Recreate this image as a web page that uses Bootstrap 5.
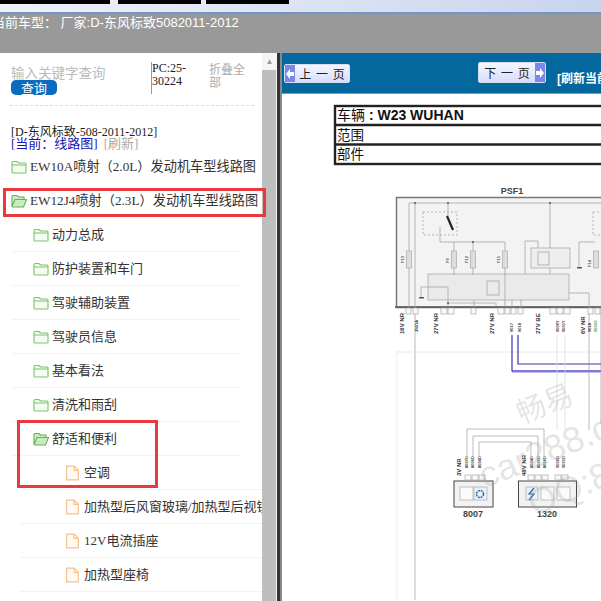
<!DOCTYPE html>
<html lang="zh"><head><meta charset="utf-8"><title>线路图</title>
<link href="https://cdn.jsdelivr.net/npm/bootstrap@5.3.0/dist/css/bootstrap.min.css" rel="stylesheet">
<style>
html,body{width:601px;height:601px;overflow:hidden;margin:0;background:#fff}
body{font-family:"Liberation Serif","Noto Sans CJK SC",serif;font-size:13px;color:#333}
.tabstrip{height:14px;background:linear-gradient(90deg,#f0f2f8,#c8d4ee);border-bottom:2px solid #6f94d0;gap:5px}
.tabblock{height:4px;background:#000}
.tb1{width:110px}.tb2{width:83px;margin-left:3px}.tb3{width:83px}
.greybar{height:39px;background:#999;color:#fff;font:13px/1 "Liberation Sans","Noto Sans CJK SC",sans-serif;padding-top:2px}
.greybar span{display:inline-block;margin-left:-8px;white-space:pre}
.workarea{height:548px}
.sidepane{width:262px;flex:none;overflow:hidden;padding-top:10px}
.searchrow{height:42px;margin-left:11px}
.searchbox{width:140px;color:#bbb;font:13.5px/1.1 "Noto Sans CJK SC",sans-serif;padding-top:2px}
.askbtn{display:block;width:46px;height:15px;background:#0a6cc0;color:#fff;border-radius:5px;text-align:center;font-size:13px;line-height:15px}
.pccode{width:58px;border-left:1px solid #999;line-height:13px;font-size:12px;color:#222;height:32px;margin-top:-1px}
.foldall{width:44px;color:#aaa;font:12px/13px "Noto Sans CJK SC",sans-serif;margin-top:-1px}
.dashrule{border-top:1px dashed #ddd;margin:0 8px 0 10px;height:21px}
.crumb{margin-left:11px;font-size:12px;line-height:12px;color:#222;height:24px}
.crumb b{font-weight:400;color:#1414b4;font-size:13px}.crumb i{font-style:normal;color:#aaa;font-size:13px;margin-left:6px}
.treerow{height:34px;display:flex;align-items:center;white-space:nowrap;border-bottom:1px solid #f3f3f3;margin-right:22px;font-size:13px;color:#333}
.treerow svg{flex:none;margin-right:3px}
.lv1{margin-left:11px;margin-right:4px;border-color:#fff;font-size:13.2px}
.lv2{margin-left:11px;padding-left:22px}
.lv3{margin-left:20px;padding-left:45px;margin-right:0;width:242px;overflow:hidden}
.lv3 svg{margin-right:4px}
.lined{position:relative}
.redframe{position:absolute;border:3px solid #e8393c;pointer-events:none}
.rf1{left:3px;top:135px;width:263px;height:29px}
.rf2{left:17px;top:367px;width:141px;height:68px}
.sbar{width:15px;flex:none;background:#f4f4f4}
.sbarup{height:17px;color:#999;font-size:8px;line-height:17px;text-align:center}
.sthumb{width:14px;flex:1;background:#bebebe}
.splitter{width:5px;flex:none;border-left:3px solid #333;border-right:2px solid #888}
.docpane{flex:1;min-width:0;overflow:hidden}
.bluebar{height:41px;background:#04689f;border-bottom:1px solid #7f9aa8}
.pgbtn{height:19px;flex:none;background:linear-gradient(#f4f6ff,#d8defa);border:1px solid #d5def5;color:#222;font:12px/17px "Noto Sans CJK SC",sans-serif;display:flex;align-items:center;border-radius:2px;white-space:nowrap}
.pgbtn u{width:10px;height:100%;background:#7a88ea;flex:none;text-decoration:none;display:flex;align-items:center;justify-content:center}
.pgbtn em{font-style:normal;flex:1;text-align:center;word-spacing:2px}
.pv{width:66px;margin:11px 0 0 2px}
.nx{width:68px;height:21px;margin:9px 0 0 128px}
.refreshlink{color:#fff;font-weight:700;font-size:12px;margin:17px 0 0 11px;white-space:nowrap;font-family:"Liberation Sans","Noto Sans CJK SC",sans-serif}
.drawing{display:block}
.drawing text{font-family:"Liberation Sans","Noto Sans CJK SC",sans-serif}
</style></head>
<body>
<div class="tabstrip d-flex align-items-start"><div class="tabblock tb1"></div><div class="tabblock tb2"></div><div class="tabblock tb3"></div></div>
<div class="greybar"><span>当前车型： 厂家:D-东风标致5082011-2012</span></div>
<div class="workarea d-flex lined">
 <div class="sidepane">
  <div class="searchrow d-flex">
   <div class="searchbox">输入关键字查询<a class="askbtn text-decoration-none">查询</a></div>
   <div class="pccode">PC:25-<br>30224</div>
   <div class="foldall">折叠全部</div>
  </div>
  <div class="dashrule"></div>
  <div class="crumb">[D-东风标致-508-2011-2012]<br><b>[当前：线路图]</b><i>[刷新]</i></div>
  <svg width="0" height="0" class="position-absolute"><defs>
   <symbol id="fc" viewBox="0 0 16 14"><path d="M1 12.5V2.5Q1 1.5 2 1.5H6L7.5 3H14Q15 3 15 4V12.5Q15 13 14 13H2Q1 13 1 12.5ZM1 5H15" fill="#f6fbf3" stroke="#7ac46b" stroke-width="1.1"/></symbol>
   <symbol id="fo" viewBox="0 0 16 14"><path d="M1 12.5V2.5Q1 1.5 2 1.5H6L7.5 3H13V5.5H4L1 12.5ZM1 12.5Q1 13 2 13H12.5L15.5 5.5H4" fill="#cdebc2" stroke="#62b356" stroke-width="1.1"/></symbol>
   <symbol id="fl" viewBox="0 0 14 15"><path d="M1.5 1H8.5L12.5 5V14H1.5ZM8.5 1V5H12.5" fill="#fffaf4" stroke="#f3c28e" stroke-width="1.1"/></symbol>
  </defs></svg>
  <div class="treerow lv1"><svg width="16" height="14"><use href="#fc"/></svg><span>EW10A喷射（2.0L）发动机车型线路图</span></div>
  <div class="treerow lv1"><svg width="16" height="14"><use href="#fo"/></svg><span>EW12J4喷射（2.3L）发动机车型线路图</span></div>
  <div class="treerow lv2"><svg width="16" height="14"><use href="#fc"/></svg><span>动力总成</span></div>
  <div class="treerow lv2"><svg width="16" height="14"><use href="#fc"/></svg><span>防护装置和车门</span></div>
  <div class="treerow lv2"><svg width="16" height="14"><use href="#fc"/></svg><span>驾驶辅助装置</span></div>
  <div class="treerow lv2"><svg width="16" height="14"><use href="#fc"/></svg><span>驾驶员信息</span></div>
  <div class="treerow lv2"><svg width="16" height="14"><use href="#fc"/></svg><span>基本看法</span></div>
  <div class="treerow lv2"><svg width="16" height="14"><use href="#fc"/></svg><span>清洗和雨刮</span></div>
  <div class="treerow lv2"><svg width="16" height="14"><use href="#fo"/></svg><span>舒适和便利</span></div>
  <div class="treerow lv3"><svg width="15" height="16"><use href="#fl"/></svg><span>空调</span></div>
  <div class="treerow lv3"><svg width="15" height="16"><use href="#fl"/></svg><span>加热型后风窗玻璃/加热型后视镜</span></div>
  <div class="treerow lv3"><svg width="15" height="16"><use href="#fl"/></svg><span>12V电流插座</span></div>
  <div class="treerow lv3"><svg width="15" height="16"><use href="#fl"/></svg><span>加热型座椅</span></div>
 </div>
 <div class="sbar d-flex flex-column"><div class="sbarup">▲</div><div class="sthumb"></div></div>
 <div class="splitter"></div>
 <div class="docpane">
  <div class="bluebar d-flex">
   <div class="pgbtn pv"><u><svg width="8" height="10"><path d="M0 5 4 0V3H8V7H4V10Z" fill="#fff"/></svg></u><em>上 一 页</em></div>
   <div class="pgbtn nx"><em>下 一 页</em><u><svg width="8" height="10"><path d="M8 5 4 0V3H0V7H4V10Z" fill="#fff"/></svg></u></div>
   <div class="refreshlink">[刷新当前页]</div>
  </div>
  <svg class="drawing" width="320" height="507" viewBox="281 94 320 507">
   <rect x="281" y="94" width="320" height="507" fill="#fff"/>
   <g fill="none" stroke="#222" stroke-width="2.400"><rect x="334" y="106" width="290" height="58"/><path d="M334 125H624M334 144.500H624"/></g>
   <text x="336" y="120" font-size="14" fill="#111">车辆 <tspan font-weight="700">: W23 WUHAN</tspan></text>
   <text x="336" y="140" font-size="13.500" fill="#111">范围</text>
   <text x="336" y="159" font-size="13.500" fill="#111">部件</text>

   <text x="511" y="194" font-size="9" font-weight="700" fill="#444" text-anchor="middle">PSF1</text>
   <rect x="395.500" y="197.500" width="230" height="110" fill="#f3f3f3" stroke="#777" stroke-width="1.500"/>
   <path d="M394 307H601" stroke="#555" stroke-width="1.500"/>
   <rect x="427" y="274" width="141" height="26" fill="#eaeaea" stroke="#aaa" stroke-width=".8"/>
   <rect x="530" y="248" width="39" height="20" fill="#eee" stroke="#aaa" stroke-width=".8"/>
   <g fill="none" stroke="#a5a5a5" stroke-width=".8">
    <path d="M408 203H601M414 203V600M447 203V216M408 203V251M408 268V307"/>
    <path d="M439 227V242H504V251M504 268V307M453 242V251M453 268V275M472 242V251M472 268V275M549 203V248M549 268V274"/>
    <rect x="422" y="212" width="34" height="23" stroke-dasharray="2 2"/>
    <rect x="592" y="212" width="20" height="23" stroke-dasharray="2 2"/>
    <rect x="537" y="252" width="11" height="13"/>
    <rect x="486" y="281" width="12" height="14"/>
    <path d="M524 274V241H537V248M578 267V242H594M568 293H588V307M420 297V287H447V307M447 303H495V307M511 307V300M520 307V300M473 300V307M588 307V430M600 307V424"/>
   </g>
   <g fill="#ddd" stroke="#aaa" stroke-width=".7">
    <rect x="405.500" y="251" width="5" height="17"/><rect x="450.500" y="251" width="5" height="17"/><rect x="469.500" y="251" width="5" height="17"/><rect x="501.500" y="251" width="5" height="17"/><rect x="592.500" y="251" width="5" height="17"/>
   </g>
   <g fill="#555"><circle cx="414" cy="203" r="1"/><circle cx="447" cy="203" r="1"/><circle cx="549" cy="203" r="1"/><circle cx="472" cy="242" r="1"/><circle cx="447" cy="303" r="1"/><rect x="418" y="297" width="5" height="1.500"/><rect x="576" y="267" width="5" height="1.500"/></g>
   <path d="M446 216 452 230" stroke="#222" stroke-width="2.200"/>
   <g font-size="4" fill="#555" font-weight="700">
    <text transform="translate(403 263) rotate(-90)">F13</text><text transform="translate(448 263) rotate(-90)">F9</text><text transform="translate(467 263) rotate(-90)">F12</text><text transform="translate(499 263) rotate(-90)">F15</text><text transform="translate(590 267) rotate(-90)">F14</text>
   </g>
   <g font-size="6" font-weight="700" fill="#333">
    <text transform="translate(403 334) rotate(-90)">16V NR</text>
    <text transform="translate(437 334) rotate(-90)">27V NR</text>
    <text transform="translate(493 334) rotate(-90)">27V NR</text>
    <text transform="translate(539 334) rotate(-90)">27V BE</text>
    <text transform="translate(584 334) rotate(-90)">6V NR</text>
    <g font-size="4">
    <text transform="translate(417 332) rotate(-90)">JS01A</text>
    <text transform="translate(512 332) rotate(-90)">9017</text>
    <text transform="translate(520 332) rotate(-90)">9018</text>
    <text transform="translate(558 332) rotate(-90)">9000Y</text>
    <text transform="translate(564 332) rotate(-90)">9001Y</text>
    <text transform="translate(590 332) rotate(-90)">9018</text>
    <text transform="translate(596 332) rotate(-90)" fill="#4a9a4a">9000V</text>
    </g>
   </g>
   <g fill="#fafafa" stroke="#999" stroke-width=".6">
    <rect x="405" y="308" width="5" height="6"/><rect x="412" y="308" width="5" height="6"/>
    <rect x="440" y="308" width="6" height="6"/><rect x="447" y="308" width="6" height="6"/><rect x="470" y="308" width="5" height="6"/>
    <rect x="497" y="308" width="6" height="6"/><rect x="504" y="308" width="5" height="6"/><rect x="510" y="308" width="5" height="6"/><rect x="517" y="308" width="5" height="6"/>
    <rect x="549" y="308" width="6" height="6"/><rect x="556" y="308" width="6" height="6"/><rect x="563" y="308" width="6" height="6"/>
    <rect x="587" y="308" width="5" height="6"/><rect x="594" y="308" width="5" height="6"/>
   </g>
   <path d="M395 352H601" stroke="#f0e4e4" stroke-width="1"/>
   <path d="M396 352V600" stroke="#eee" stroke-width="1"/>
   <path d="M511 371.500H601" stroke="#c2beee" stroke-width="3"/>
   <path d="M511 335V371H601M517 335V364H601" fill="none" stroke="#3b34a8" stroke-width="1.200"/>
   <path d="M556 335V430M564 335V430" stroke="#cfe7cf" stroke-width=".8" fill="none"/>
   <g fill="none" stroke="#aaa" stroke-width=".8">
    <path d="M466 456V429H543V456M472 456V436H537V456M478 456V442H530V456"/>
   </g>
   <g font-size="4" font-weight="700" fill="#333">
    <text transform="translate(467 468) rotate(-90)">8007D</text>
    <text transform="translate(473 468) rotate(-90)">8006D</text>
    <text transform="translate(480 468) rotate(-90)">8004D</text>
    <text transform="translate(532 468) rotate(-90)">8004D</text>
    <text transform="translate(539 468) rotate(-90)">8005D</text>
    <text transform="translate(545 468) rotate(-90)">8006D</text>
    <text transform="translate(558 468) rotate(-90)">9000D</text>
    <text transform="translate(564 468) rotate(-90)">9001D</text>
    <text transform="translate(460 476) rotate(-90)" font-size="6">3V NR</text>
    <text transform="translate(525 476) rotate(-90)" font-size="6">48V NR</text>
   </g>
   <g fill="#f2f2f2" stroke="#444" stroke-width="1">
    <rect x="453" y="481" width="39" height="26"/>
    <rect x="517.500" y="481" width="58" height="26"/>
   </g>
   <g fill="#fafafa" stroke="#aaa" stroke-width=".7">
    <rect x="459" y="487" width="13" height="13"/><rect x="473" y="487" width="13" height="13" fill="#eaf1f8"/>
    <rect x="525" y="487" width="12" height="13" fill="#eaf1f8"/><rect x="540" y="487" width="13" height="13"/><rect x="556" y="487" width="13" height="13"/>
    <rect x="464" y="475" width="6" height="5"/><rect x="471" y="475" width="6" height="5"/><rect x="478" y="475" width="6" height="5"/>
    <rect x="527" y="475" width="6" height="5"/><rect x="534" y="475" width="6" height="5"/><rect x="541" y="475" width="6" height="5"/><rect x="554" y="475" width="6" height="5"/><rect x="561" y="475" width="6" height="5"/>
   </g>
   <circle cx="479" cy="494" r="3.500" fill="none" stroke="#2d6ca8" stroke-width="1.500" stroke-dasharray="2 .8"/>
   <path d="M533 488 528 494H533L528 500" fill="none" stroke="#2d6ca8" stroke-width="1.200"/>
   <text x="472" y="517" font-size="9" font-weight="700" fill="#444" text-anchor="middle">8007</text>
   <text x="546" y="517" font-size="9" font-weight="700" fill="#444" text-anchor="middle">1320</text>
   <g fill="#9a9a9a" fill-opacity=".26" transform="rotate(-22 540 440)">
    <text x="528" y="418" font-size="29">畅易</text>
    <text x="470" y="464" font-size="36">car288.com</text>
    <text x="505" y="508" font-size="36">QQ:8016</text>
   </g>
  </svg>
 </div>
 <div class="redframe rf1"></div><div class="redframe rf2"></div>
</div>
<script src="https://cdn.jsdelivr.net/npm/bootstrap@5.3.0/dist/js/bootstrap.bundle.min.js"></script>
</body></html>
